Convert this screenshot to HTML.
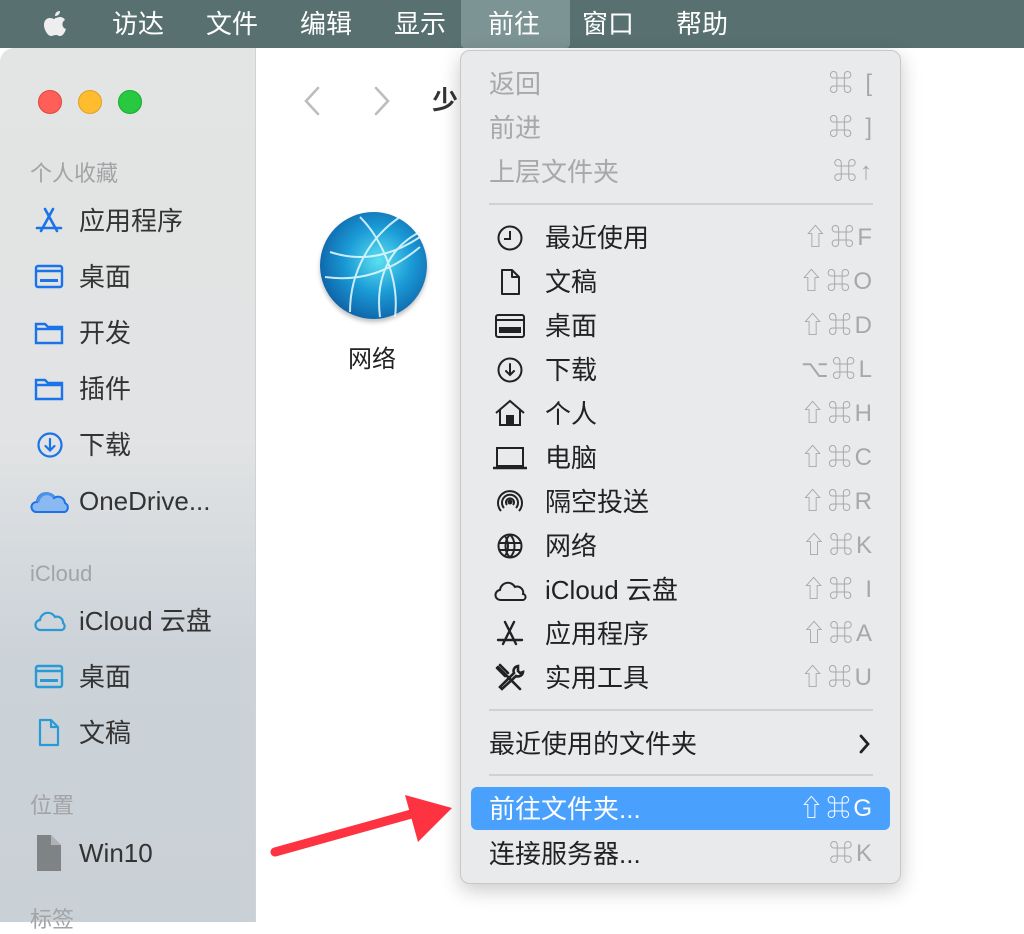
<!DOCTYPE html><html><head><meta charset="utf-8"><style>
*{margin:0;padding:0;box-sizing:border-box}
body{width:1024px;height:922px;overflow:hidden;position:relative;background:#fff;font-family:"Liberation Sans","Noto Sans CJK SC",sans-serif}
.a{position:absolute;white-space:nowrap}
#bar{left:0;top:0;width:1024px;height:48px;background:#587170}
.mb{top:7px;font-size:26px;line-height:34px;color:#fff}
#side{left:0;top:48px;width:256px;height:874px;background:linear-gradient(180deg,#e3e4e4 0%,#e1e3e4 45%,#cbd2d8 70%,#c9d0d6 100%);border-radius:14px 0 0 0;border-right:1px solid #d2d2d2}
.sh{font-size:22px;color:#a2a4a6;left:30px;line-height:28px}
.si{font-size:26px;color:#333;left:79px;line-height:32px}
.ic{left:33px}
#menu{left:460px;top:50px;width:441px;height:834px;background:#e8eaec;border-radius:10px;box-shadow:0 6px 20px rgba(0,0,0,.22);border:1px solid #c8c8c8}
.mt{font-size:26px;line-height:32px;color:#222;left:84px}
.ms{font-size:24px;line-height:32px;color:#a8a8a8;right:28px;letter-spacing:3px;margin-right:-3px}
.sep{left:28px;width:384px;height:2px;background:#cfd1d3}
</style></head><body>
<div class="a" id="bar"></div>
<div class="a" style="left:461px;top:0;width:109px;height:48px;background:#7c9493;border-radius:0 0 4px 4px"></div>
<svg class="a" style="left:40px;top:9px" width="30" height="30" viewBox="0 0 30 30"><path d="M20 2c0 3-2 5-5 5 0-3 2-5 5-5zM15 9c2 0 3-1 5-1 2 0 4 1 5 3-4 2-3 8 1 9-1 3-3 7-6 7-2 0-2-1-4-1s-3 1-5 1c-3 0-7-6-7-11 0-5 3-7 6-7 2 0 3 1 5 1z" fill="#eee"/></svg>
<div class="a mb" style="left:112px">访达</div>
<div class="a mb" style="left:206px">文件</div>
<div class="a mb" style="left:300px">编辑</div>
<div class="a mb" style="left:394px">显示</div>
<div class="a mb" style="left:488px">前往</div>
<div class="a mb" style="left:582px">窗口</div>
<div class="a mb" style="left:676px">帮助</div>

<div class="a" id="side"></div>
<div class="a" style="left:38px;top:90px;width:24px;height:24px;border-radius:50%;background:#fe5f57;border:1px solid #e0443e"></div>
<div class="a" style="left:78px;top:90px;width:24px;height:24px;border-radius:50%;background:#febc2e;border:1px solid #dea123"></div>
<div class="a" style="left:118px;top:90px;width:24px;height:24px;border-radius:50%;background:#28c840;border:1px solid #1aab29"></div>

<div class="a sh" style="top:160px">个人收藏</div>
<svg class="a ic" style="top:206px" width="32" height="30" viewBox="0 0 32 30" fill="none" stroke="#1a73e8" stroke-width="2.6" stroke-linecap="round"><path d="M12 3l12 22M20 3L8 25M4 22h24"/></svg>
<div class="a si" style="top:205px">应用程序</div>
<svg class="a ic" style="top:264px" width="32" height="26" viewBox="0 0 32 26" fill="none" stroke="#1a73e8" stroke-width="2.4"><rect x="3" y="2" width="26" height="21" rx="2"/><path d="M3 7h26"/><rect x="7" y="15" width="18" height="3" fill="#1a73e8" stroke="none"/></svg>
<div class="a si" style="top:261px">桌面</div>
<svg class="a ic" style="top:320px" width="32" height="26" viewBox="0 0 32 26" fill="none" stroke="#1a73e8" stroke-width="2.4"><path d="M3 4h9l3 3h14v16H3z M3 9h26"/></svg>
<div class="a si" style="top:317px">开发</div>
<svg class="a ic" style="top:376px" width="32" height="26" viewBox="0 0 32 26" fill="none" stroke="#1a73e8" stroke-width="2.4"><path d="M3 4h9l3 3h14v16H3z M3 9h26"/></svg>
<div class="a si" style="top:373px">插件</div>
<svg class="a ic" style="top:431px" width="32" height="28" viewBox="0 0 32 28" fill="none" stroke="#1a73e8" stroke-width="2.2" stroke-linecap="round"><circle cx="17" cy="14" r="11.5"/><path d="M17 8v11M12.5 15l4.5 4.5 4.5-4.5"/></svg>
<div class="a si" style="top:429px">下载</div>
<svg class="a" style="left:30px;top:486px" width="40" height="30" viewBox="0 0 40 30"><path d="M6 26a5 5 0 0 1 1-10 9 9 0 0 1 17-4 7 7 0 0 1 11 5 5 5 0 0 1 0 9z" fill="#8ab8f0" stroke="#1a73e8" stroke-width="2"/><path d="M8 16a9 9 0 0 1 16-5" fill="none" stroke="#4c92ea" stroke-width="3"/></svg>
<div class="a si" style="top:485px">OneDrive...</div>

<div class="a sh" style="top:560px">iCloud</div>
<svg class="a ic" style="top:607px" width="34" height="26" viewBox="0 0 34 26" fill="none" stroke="#2a9ad4" stroke-width="2.2"><path d="M8 23a5 5 0 0 1-1-10 8 8 0 0 1 15-3 6 6 0 0 1 8 6 4 4 0 0 1-1 7z"/></svg>
<div class="a si" style="top:605px">iCloud 云盘</div>
<svg class="a ic" style="top:664px" width="32" height="26" viewBox="0 0 32 26" fill="none" stroke="#2a9ad4" stroke-width="2.4"><rect x="3" y="2" width="26" height="21" rx="2"/><path d="M3 7h26"/><rect x="7" y="15" width="18" height="3" fill="#2a9ad4" stroke="none"/></svg>
<div class="a si" style="top:661px">桌面</div>
<svg class="a ic" style="top:718px" width="32" height="30" viewBox="0 0 32 30" fill="none" stroke="#2a9ad4" stroke-width="2.2" stroke-linejoin="round"><path d="M7 2h11l7 7v18H7z M18 2v7h7"/></svg>
<div class="a si" style="top:717px">文稿</div>

<div class="a sh" style="top:792px">位置</div>
<svg class="a ic" style="top:834px" width="32" height="38" viewBox="0 0 32 38"><path d="M4 1h14l10 10v26H4z" fill="#808385"/><path d="M18 1v10h10" fill="#b0b3b5"/></svg>
<div class="a si" style="top:837px">Win10</div>
<div class="a sh" style="top:906px">标签</div>

<svg class="a" style="left:300px;top:86px" width="100" height="30" viewBox="0 0 100 30" fill="none" stroke="#bdbdbd" stroke-width="2.6" stroke-linecap="round"><path d="M18 2L6 15l12 13M76 2l12 13-12 13"/></svg>
<div class="a" style="left:432px;top:84px;font-size:26px;font-weight:bold;color:#333;line-height:32px">少</div>
<div class="a" style="left:320px;top:212px;width:107px;height:107px;border-radius:50%;background:radial-gradient(circle at 55% 45%,#5ce0f0 0%,#1a9ad6 40%,#0d5aa0 80%,#0a3d78 100%);box-shadow:0 3px 4px rgba(0,0,0,.25)"></div>
<svg class="a" style="left:320px;top:212px" width="107" height="107" viewBox="0 0 107 107" fill="none" stroke="#e8fbff" stroke-width="2" opacity=".85"><path d="M10 40c30 10 60 5 90-15M5 65c35 5 65-5 95-30M30 100c0-40 20-75 50-95M60 105c-5-40 10-70 40-85M40 5c20 20 40 60 35 100"/></svg>
<div class="a" style="left:348px;top:344px;font-size:24px;color:#222;line-height:32px">网络</div>

<svg class="a" style="left:265px;top:780px" width="200" height="90" viewBox="0 0 200 90"><path d="M10 72L150 33" stroke="#fe3341" stroke-width="9" stroke-linecap="round"/><path d="M140 15L187 28 153 62z" fill="#fe3341"/></svg>

<div class="a" id="menu">
<div class="a mt" style="left:28px;top:17px;color:#a8a8a8">返回</div><div class="a ms" style="top:17px">⌘ [</div>
<div class="a mt" style="left:28px;top:61px;color:#a8a8a8">前进</div><div class="a ms" style="top:61px">⌘ ]</div>
<div class="a mt" style="left:28px;top:105px;color:#a8a8a8">上层文件夹</div><div class="a ms" style="top:105px">⌘↑</div>
<div class="a sep" style="top:152px"></div>

<svg class="a" style="left:34px;top:172px" width="30" height="30" viewBox="0 0 30 30" fill="none" stroke="#222" stroke-width="2"><circle cx="15" cy="15" r="11.5"/><path d="M15 8v8H9"/></svg>
<div class="a mt" style="top:171px">最近使用</div><div class="a ms" style="top:171px">⇧⌘F</div>
<svg class="a" style="left:34px;top:216px" width="30" height="30" viewBox="0 0 30 30" fill="none" stroke="#222" stroke-width="2" stroke-linejoin="round"><path d="M7 3h10l7 7v17H7z M17 3v7h7"/></svg>
<div class="a mt" style="top:215px">文稿</div><div class="a ms" style="top:215px">⇧⌘O</div>
<svg class="a" style="left:33px;top:260px" width="32" height="30" viewBox="0 0 32 30" fill="none" stroke="#222" stroke-width="2"><rect x="2" y="4" width="28" height="22" rx="2"/><path d="M2 9h28"/><rect x="6" y="17" width="20" height="4" fill="#222"/></svg>
<div class="a mt" style="top:259px">桌面</div><div class="a ms" style="top:259px">⇧⌘D</div>
<svg class="a" style="left:34px;top:304px" width="30" height="30" viewBox="0 0 30 30" fill="none" stroke="#222" stroke-width="2" stroke-linecap="round"><circle cx="15" cy="15" r="11.5"/><path d="M15 9v11M11 16l4 4 4-4"/></svg>
<div class="a mt" style="top:303px">下载</div><div class="a ms" style="top:303px">⌥⌘L</div>
<svg class="a" style="left:33px;top:347px" width="32" height="30" viewBox="0 0 32 30" fill="none" stroke="#222" stroke-width="2"><path d="M2 15L16 3l14 12M6 12v15h20V12"/><rect x="13" y="18" width="6" height="9" fill="#222"/></svg>
<div class="a mt" style="top:347px">个人</div><div class="a ms" style="top:347px">⇧⌘H</div>
<svg class="a" style="left:31px;top:392px" width="36" height="30" viewBox="0 0 36 30" fill="none" stroke="#222" stroke-width="2"><rect x="5" y="5" width="26" height="18"/><path d="M1 25h34" stroke-width="2.5"/></svg>
<div class="a mt" style="top:391px">电脑</div><div class="a ms" style="top:391px">⇧⌘C</div>
<svg class="a" style="left:34px;top:436px" width="30" height="30" viewBox="0 0 30 30" fill="none" stroke="#222" stroke-width="2"><path d="M6 24a12 12 0 1 1 18 0M9 21a8 8 0 1 1 12 0M12 18a4 4 0 1 1 6 0"/><circle cx="15" cy="15" r="1.5" fill="#222"/></svg>
<div class="a mt" style="top:435px">隔空投送</div><div class="a ms" style="top:435px">⇧⌘R</div>
<svg class="a" style="left:34px;top:480px" width="30" height="30" viewBox="0 0 30 30" fill="none" stroke="#222" stroke-width="2"><circle cx="15" cy="15" r="11.5"/><path d="M4 12h22M4 19h22M15 3.5c-6 6-6 17 0 23M15 3.5c6 6 6 17 0 23M10 5c4 6 4 14 0 20"/></svg>
<div class="a mt" style="top:479px">网络</div><div class="a ms" style="top:479px">⇧⌘K</div>
<svg class="a" style="left:32px;top:524px" width="34" height="30" viewBox="0 0 34 30" fill="none" stroke="#222" stroke-width="2"><path d="M8 25a5 5 0 0 1-1-10 8 8 0 0 1 15-3 6 6 0 0 1 8 7 3 3 0 0 1-1 6z"/></svg>
<div class="a mt" style="top:523px">iCloud 云盘</div><div class="a ms" style="top:523px">⇧⌘ I</div>
<svg class="a" style="left:34px;top:568px" width="30" height="30" viewBox="0 0 30 30" fill="none" stroke="#222" stroke-width="2.4" stroke-linecap="round"><path d="M10 3l11 22M19 3L8 25M3 21h24"/></svg>
<div class="a mt" style="top:567px">应用程序</div><div class="a ms" style="top:567px">⇧⌘A</div>
<svg class="a" style="left:33px;top:611px" width="32" height="32" viewBox="0 0 32 32" fill="none" stroke="#222" stroke-width="2.6" stroke-linecap="round"><path d="M4 5l22 22M6 3l8 8M3 6l8 8M24 4a5 5 0 0 0-4 7L6 25l2 2 14-13a5 5 0 0 0 7-4l-3 1-2-2z"/></svg>
<div class="a mt" style="top:611px">实用工具</div><div class="a ms" style="top:611px">⇧⌘U</div>

<div class="a sep" style="top:658px"></div>
<div class="a mt" style="left:28px;top:677px">最近使用的文件夹</div>
<svg class="a" style="left:397px;top:682px" width="14" height="22" viewBox="0 0 14 22" fill="none" stroke="#222" stroke-width="2.8" stroke-linecap="round"><path d="M3 3l7 8-7 8"/></svg>
<div class="a sep" style="top:723px"></div>
<div class="a" style="left:10px;top:736px;width:419px;height:43px;background:#4aa0fd;border-radius:6px"></div>
<div class="a mt" style="left:28px;top:742px;color:#fff">前往文件夹...</div><div class="a ms" style="top:742px;color:#fff">⇧⌘G</div>
<div class="a mt" style="left:28px;top:787px">连接服务器...</div><div class="a ms" style="top:787px">⌘K</div>
</div>
</body></html>
